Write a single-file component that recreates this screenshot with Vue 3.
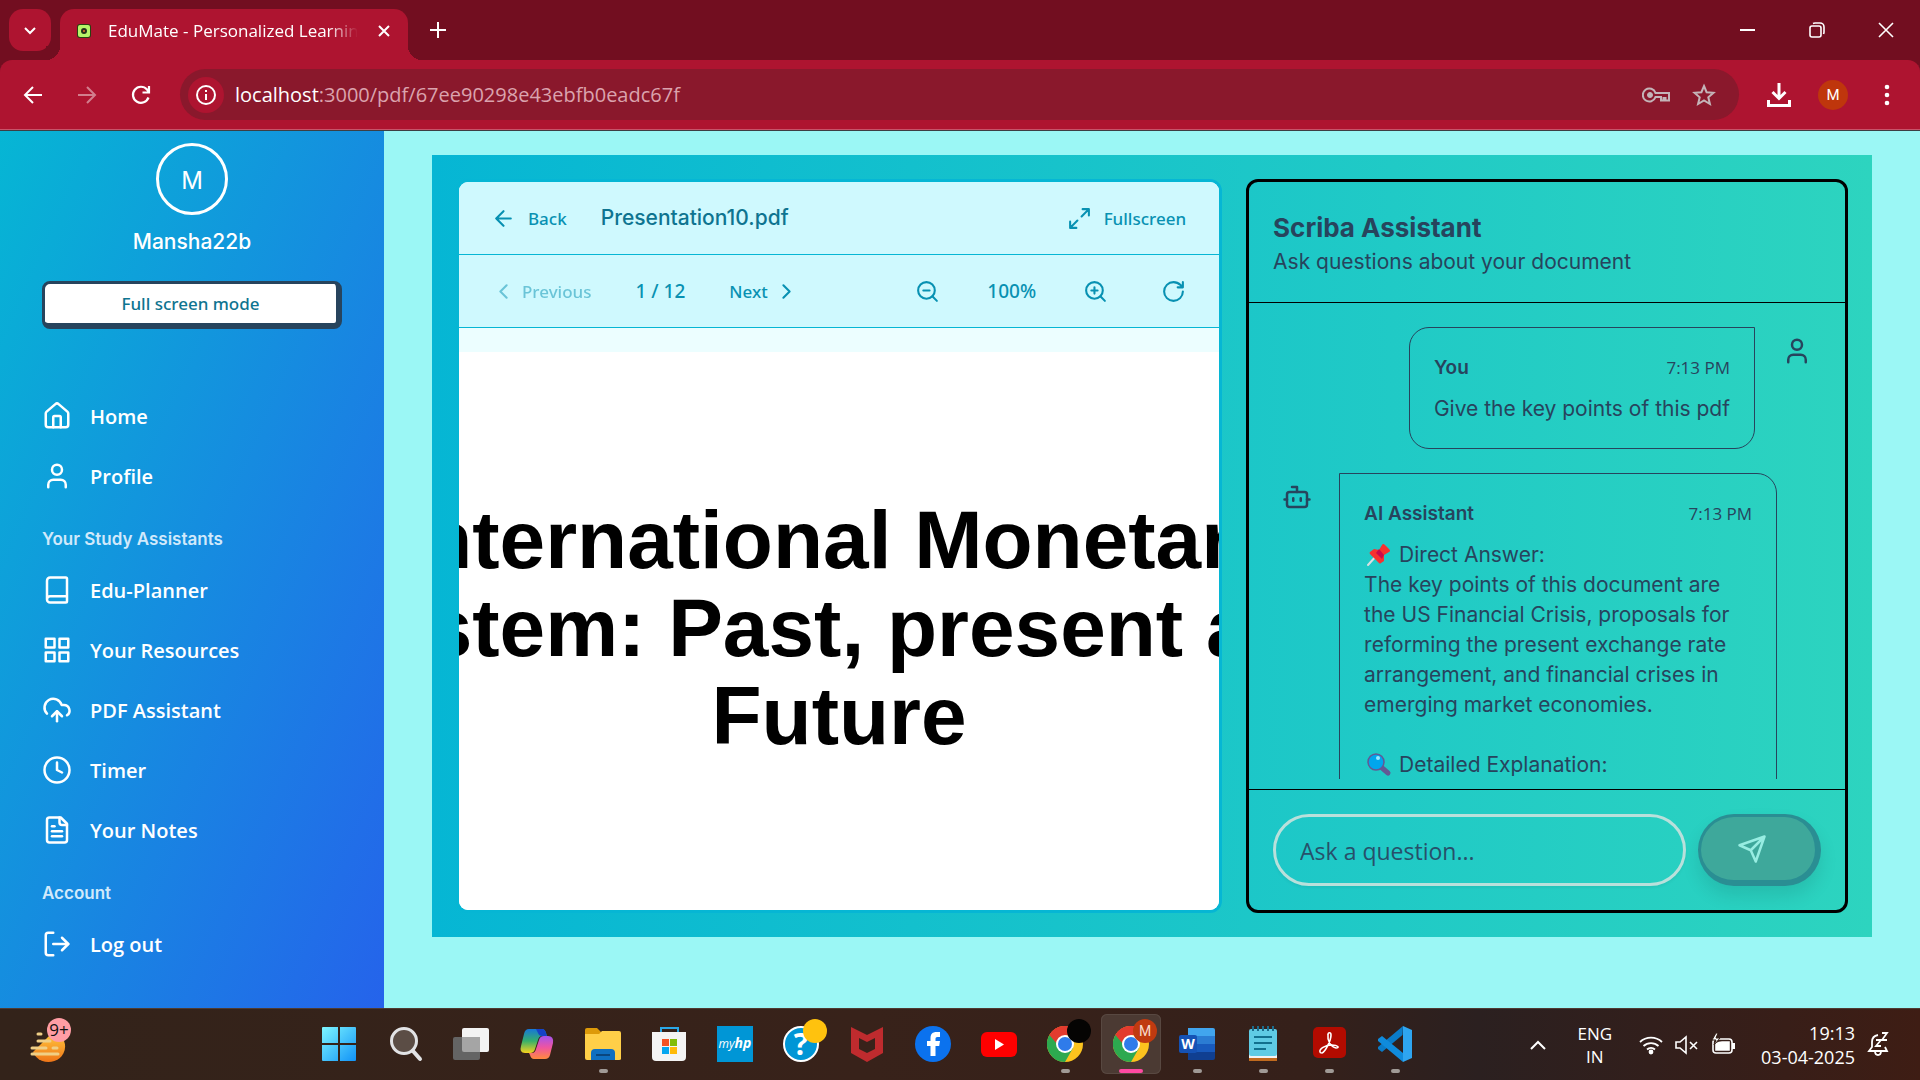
<script setup>
import { ref } from 'vue'

const mainLinks = [
  { label: 'Home', paths: ['M15 21v-8a1 1 0 0 0-1-1h-4a1 1 0 0 0-1 1v8', 'M3 10a2 2 0 0 1 .709-1.528l7-5.999a2 2 0 0 1 2.582 0l7 5.999A2 2 0 0 1 21 10v9a2 2 0 0 1-2 2H5a2 2 0 0 1-2-2z'] },
  { label: 'Profile', paths: ['M19 21v-2a4 4 0 0 0-4-4H9a4 4 0 0 0-4 4v2', 'M8 7a4 4 0 1 0 8 0a4 4 0 1 0-8 0'] }
]

const studyLinks = [
  { label: 'Edu-Planner', paths: ['M4 19.5v-15A2.5 2.5 0 0 1 6.5 2H19a1 1 0 0 1 1 1v18a1 1 0 0 1-1 1H6.5a1 1 0 0 1 0-5H20'] },
  { label: 'Your Resources', paths: ['M3 3h7v7H3z', 'M14 3h7v7h-7z', 'M14 14h7v7h-7z', 'M3 14h7v7H3z'] },
  { label: 'PDF Assistant', paths: ['M12 13v8', 'm8 17 4-4 4 4', 'M4 14.899A7 7 0 1 1 15.71 8h1.79a4.5 4.5 0 0 1 2.5 8.242'] },
  { label: 'Timer', paths: ['M2 12a10 10 0 1 0 20 0a10 10 0 1 0-20 0', 'M12 6v6l4 2'] },
  { label: 'Your Notes', paths: ['M15 2H6a2 2 0 0 0-2 2v16a2 2 0 0 0 2 2h12a2 2 0 0 0 2-2V7Z', 'M14 2v4a2 2 0 0 0 2 2h4', 'M10 9H8', 'M16 13H8', 'M16 17H8'] }
]

const accountLinks = [
  { label: 'Log out', paths: ['M9 21H5a2 2 0 0 1-2-2V5a2 2 0 0 1 2-2h4', 'm16 17 5-5-5-5', 'M21 12H9'] }
]

const groups = [
  { title: '', links: mainLinks },
  { title: 'Your Study Assistants', links: studyLinks },
  { title: 'Account', links: accountLinks }
]

const question = ref('')
</script>

<template>
  <div class="desktop">
    <header class="tabstrip">
      <button class="tab-search" aria-label="Search tabs">
        <svg width="18" height="18" viewBox="0 0 18 18" fill="none" stroke="currentColor" stroke-width="2"><path d="m4 7 5 5 5-5" /></svg>
      </button>
      <div class="tab">
        <svg class="favicon" width="14" height="14" viewBox="0 0 14 14">
          <rect width="14" height="14" rx="3" fill="#27420f" />
          <rect x="1" y="1" width="12" height="12" rx="2" fill="#b6f569" />
          <circle cx="7" cy="7" r="3" fill="#26331b" /><circle cx="7" cy="7" r="1" fill="#e8752c" />
        </svg>
        <span class="tab-title">EduMate - Personalized Learning</span>
        <button class="tab-close" aria-label="Close tab">
          <svg width="14" height="14" viewBox="0 0 14 14" fill="none" stroke="currentColor" stroke-width="2"><path d="m2 2 10 10M12 2 2 12" /></svg>
        </button>
      </div>
      <button class="new-tab" aria-label="New tab">
        <svg width="18" height="18" viewBox="0 0 18 18" fill="none" stroke="currentColor" stroke-width="2"><path d="M9 1v16M1 9h16" /></svg>
      </button>
      <div class="window-buttons">
        <button aria-label="Minimize"><svg width="16" height="16" viewBox="0 0 16 16" fill="none" stroke="currentColor" stroke-width="2"><path d="M0 8h15" /></svg></button>
        <button aria-label="Restore"><svg width="16" height="16" viewBox="0 0 16 16" fill="none" stroke="currentColor" stroke-width="1.6"><rect x="1" y="4" width="11" height="11" rx="2" /><path d="M4 1.500Q5 1 6 1h5a4 4 0 0 1 4 4v5q0 1-.5 2" /></svg></button>
        <button aria-label="Close"><svg width="16" height="16" viewBox="0 0 16 16" fill="none" stroke="currentColor" stroke-width="1.600"><path d="m1 1 14 14M15 1 1 15" /></svg></button>
      </div>
    </header>

    <div class="toolbar-wrap">
      <div class="toolbar">
        <button aria-label="Back"><svg width="20" height="20" viewBox="0 0 20 20" fill="none" stroke="currentColor" stroke-width="2"><path d="M19 10H2M10 2l-8 8 8 8" /></svg></button>
        <button class="dim" aria-label="Forward"><svg width="20" height="20" viewBox="0 0 20 20" fill="none" stroke="currentColor" stroke-width="2"><path d="M1 10h17M10 2l8 8-8 8" /></svg></button>
        <button aria-label="Reload"><svg width="20" height="20" viewBox="0 0 20 20" fill="none" stroke="currentColor" stroke-width="2.200"><path d="M17.500 12.500A8 8 0 1 1 16 4.500L18 7M18 1v6.500h-6.500" /></svg></button>
        <div class="address">
          <span class="site-info">
            <svg width="20" height="20" viewBox="0 0 20 20" fill="none" stroke="currentColor" stroke-width="2"><circle cx="10" cy="10" r="9" /><path d="M10 9v6M10 5v2" /></svg>
          </span>
          <span class="url"><b>localhost</b>:3000/pdf/67ee90298e43ebfb0eadc67f</span>
          <button class="addr-icon" aria-label="Passwords">
            <svg width="28" height="18" viewBox="0 0 28 18" fill="none" stroke="currentColor" stroke-width="2"><path d="M13.500 7A6.500 6.500 0 1 0 13.500 11H19v3.500h2.500V12h2v2.500H27V7Z" /><circle cx="8" cy="9" r="2.500" fill="currentColor" stroke-width="1" /></svg>
          </button>
          <button class="addr-icon" aria-label="Bookmark">
            <svg width="24" height="24" viewBox="0 0 24 24" fill="none" stroke="currentColor" stroke-width="2"><path d="m12 3 2.600 6.200 6.900.6-5.200 4.500 1.600 6.700-5.900-3.600-5.900 3.600 1.600-6.700-5.200-4.500 6.900-.6z" /></svg>
          </button>
        </div>
        <button class="downloads" aria-label="Downloads"><svg width="26" height="26" viewBox="0 0 26 26" fill="none" stroke="currentColor" stroke-width="3"><path d="M13 1v15M6.500 10l6.500 6.500 6.500-6.500M2.500 18v5.500h21V18" /></svg></button>
        <button class="account" aria-label="Account">M</button>
        <button aria-label="Menu"><svg width="6" height="24" viewBox="0 0 6 24" fill="currentColor"><circle cx="3" cy="4" r="2.300" /><circle cx="3" cy="12" r="2.300" /><circle cx="3" cy="20" r="2.300" /></svg></button>
      </div>
    </div>

    <div class="page">
      <aside class="sidebar">
        <div class="avatar">M</div>
        <p class="username">Mansha22b</p>
        <button class="fullscreen-mode">Full screen mode</button>
        <nav>
          <template v-for="group in groups" :key="group.title">
            <h4 v-if="group.title">{{ group.title }}</h4>
            <a v-for="link in group.links" :key="link.label" href="#">
              <svg class="line-icon" width="30" height="30" viewBox="0 0 24 24"><path v-for="d in link.paths" :key="d" :d="d" /></svg>
              <span>{{ link.label }}</span>
            </a>
          </template>
        </nav>
      </aside>

      <main>
        <div class="workspace">
          <section class="viewer">
            <div class="viewer-row">
              <div class="group title-group">
                <button><svg class="line-icon" width="25" height="25" viewBox="0 0 24 24"><path d="m12 19-7-7 7-7M19 12H5" /></svg>Back</button>
                <h2>Presentation10.pdf</h2>
              </div>
              <button><svg class="line-icon" width="25" height="25" viewBox="0 0 24 24"><path d="M15 3h6v6M9 21H3v-6M21 3l-7 7M3 21l7-7" /></svg>Fullscreen</button>
            </div>
            <div class="viewer-row">
              <div class="group pager">
                <button disabled><svg class="line-icon" width="25" height="25" viewBox="0 0 24 24"><path d="m15 18-6-6 6-6" /></svg>Previous</button>
                <span class="count">1 / 12</span>
                <button>Next<svg class="line-icon" width="25" height="25" viewBox="0 0 24 24"><path d="m9 18 6-6-6-6" /></svg></button>
              </div>
              <div class="group zoomer">
                <button aria-label="Zoom out"><svg class="line-icon" width="25" height="25" viewBox="0 0 24 24"><circle cx="11" cy="11" r="8" /><path d="m21 21-4.350-4.350M8 11h6" /></svg></button>
                <span class="count">100%</span>
                <button aria-label="Zoom in"><svg class="line-icon" width="25" height="25" viewBox="0 0 24 24"><circle cx="11" cy="11" r="8" /><path d="m21 21-4.350-4.350M8 11h6M11 8v6" /></svg></button>
                <button class="rotate" aria-label="Rotate"><svg class="line-icon" width="25" height="25" viewBox="0 0 24 24"><path d="M21 12a9 9 0 1 1-9-9c2.520 0 4.930 1 6.740 2.740L21 8M21 3v5h-5" /></svg></button>
              </div>
            </div>
            <div class="pdf-scroll">
              <div class="slide">
                <h1>International Monetary<br />System: Past, present and<br />Future</h1>
              </div>
            </div>
          </section>

          <section class="chat">
            <header class="chat-head">
              <h3>Scriba Assistant</h3>
              <p>Ask questions about your document</p>
            </header>
            <div class="messages">
              <div class="message mine">
                <div class="bubble">
                  <div class="meta"><strong>You</strong><time>7:13 PM</time></div>
                  <p>Give the key points of this pdf</p>
                </div>
                <svg class="line-icon who" width="30" height="30" viewBox="0 0 24 24"><path d="M19 21v-2a4 4 0 0 0-4-4H9a4 4 0 0 0-4 4v2" /><circle cx="12" cy="7" r="4" /></svg>
              </div>
              <div class="message">
                <svg class="line-icon who" width="30" height="30" viewBox="0 0 24 24"><path d="M12 8V4H8M2 14h2M20 14h2M15 13v2M9 13v2" /><rect x="4" y="8" width="16" height="12" rx="2" /></svg>
                <div class="bubble">
                  <div class="meta"><strong>AI Assistant</strong><time>7:13 PM</time></div>
                  <p class="with-emoji">
                    <svg width="28" height="24" viewBox="0 0 28 24">
                      <path d="m4 22 9-10" stroke="#d9dfe2" stroke-width="2" stroke-linecap="round" />
                      <path d="m6 9 4-3 5 1 3-5q1-2 3 0l4 4q2 2 0 3l-5 3v6l-3 2q-1 1-2 0L6 11q-1-1 0-2z" fill="#f8312f" />
                      <path d="m15 6 5 6-2 4-6-6z" fill="#ca0b4a" />
                    </svg>Direct Answer:
                  </p>
                  <p>The key points of this document are the US Financial Crisis, proposals for reforming the present exchange rate arrangement, and financial crises in emerging market economies.</p>
                  <p class="with-emoji later">
                    <svg width="28" height="24" viewBox="0 0 28 24">
                      <path d="m17 14 7 6" stroke="#635994" stroke-width="5" stroke-linecap="round" />
                      <circle cx="12" cy="9" r="8" fill="#00a6ed" stroke="#635994" stroke-width="1.500" />
                      <circle cx="14" cy="5" r="2" fill="#9be9ff" />
                    </svg>Detailed Explanation:
                  </p>
                </div>
              </div>
            </div>
            <form class="composer" @submit.prevent>
              <input v-model="question" type="text" placeholder="Ask a question..." aria-label="Ask a question" />
              <button type="submit" aria-label="Send">
                <svg class="line-icon" width="30" height="30" viewBox="0 0 24 24"><path d="m22 2-7 20-4-9-9-4ZM22 2 11 13" /></svg>
              </button>
            </form>
          </section>
        </div>
      </main>
    </div>

    <footer class="taskbar">
      <button class="weather" aria-label="Weather">
        <svg width="36" height="32" viewBox="2 14 36 32">
          <defs><linearGradient id="sun" x2="0" y2="1"><stop offset="0" stop-color="#ffc33b" /><stop offset="1" stop-color="#ef7518" /></linearGradient></defs>
          <path d="M36 24a16 15 0 0 1-31 11l17-17z" fill="url(#sun)" />
          <path d="M10 17h3M10 24h12M4 31h14M25 31h4M4 37h26" stroke="#f0cf86" stroke-width="3" stroke-linecap="round" />
        </svg>
        <span class="badge">9+</span>
      </button>

      <div class="apps">
        <button aria-label="Start"><svg width="36" height="36" viewBox="0 0 36 36"><defs><linearGradient id="win" x2="1" y2="1"><stop offset="0" stop-color="#7ef6ff" /><stop offset="1" stop-color="#1193f7" /></linearGradient></defs><path d="M2 1h15v16H1V2q0-1 1-1zM19 1h15q1 0 1 1v15H19zM1 19h16v16H2q-1 0-1-1zM19 19h16v15q0 1-1 1H19z" fill="url(#win)" /></svg></button>
        <button aria-label="Search"><svg width="36" height="36" viewBox="0 0 36 36" fill="none" stroke="#e2e3e5"><circle cx="17" cy="15" r="12.500" fill="#5b4d45" stroke-width="3" /><path d="m26 25 7 8" stroke-width="4" stroke-linecap="round" /></svg></button>
        <button aria-label="Task view"><svg width="38" height="36" viewBox="0 0 38 36"><rect x="10" y="2" width="27" height="24" rx="2" fill="#f3f3f3" /><rect x="1" y="11" width="27" height="23" rx="2" fill="#646464" /><path d="M10 11h18v15H12q-2 0-2-2z" fill="#a5a5a5" /></svg></button>
        <button aria-label="Copilot"><svg width="36" height="36" viewBox="0 0 36 36"><defs><linearGradient id="cpa" x2="0" y2="1"><stop offset="0" stop-color="#1677d8" /><stop offset=".5" stop-color="#35b06b" /><stop offset="1" stop-color="#f7d21c" /></linearGradient><linearGradient id="cpb" x2="0" y2="1"><stop offset="0" stop-color="#a453ef" /><stop offset=".5" stop-color="#ef55a0" /><stop offset="1" stop-color="#ff8a3d" /></linearGradient></defs><path d="M10 3h13q3 0 4 4l1 3h-5q-3 0-4 4l-3 9q-1 4-5 4H6q-6 0-4-7l3-12q1-5 5-5z" fill="url(#cpa)" /><path d="M17 3h6q3 0 4 4l1 3h-5q-3 0-4-3z" fill="#1642c7" /><path d="M26 33H15q-3 0-4-4l-1-2h3q3 0 4-4l3-9q1-4 5-4h4q6 0 5 7l-3 12q-1 4-5 4z" fill="url(#cpb)" /></svg></button>
        <button aria-label="File Explorer" class="open"><svg width="38" height="36" viewBox="0 0 38 36"><path d="M1 4q0-2 2-2h10l4 4v4H1z" fill="#dd9a09" /><path d="M1 8h14l3-3h17q2 0 2 2v26q0 1-2 1H3q-2 0-2-2z" fill="#ffcf48" /><path d="M7 34V27q0-4 4-4h16q4 0 4 4v7z" fill="#0f6fc0" /><path d="M12 29h14" stroke="#0a467e" stroke-width="2" /></svg></button>
        <button aria-label="Microsoft Store"><svg width="36" height="36" viewBox="0 0 36 36"><path d="M10 6V2h17v5" fill="none" stroke="#2aa8e8" stroke-width="2" /><path d="M1 6h34v25q0 4-4 4H5q-4 0-4-4z" fill="#f4f4f4" /><path fill="#f35325" d="M11 13h7v7h-7z" /><path fill="#81bc06" d="M19 13h7v7h-7z" /><path fill="#05a6f0" d="M11 21h7v7h-7z" /><path fill="#ffba08" d="M19 21h7v7h-7z" /></svg></button>
        <button aria-label="myHP"><span class="myhp">my<b>hp</b></span></button>
        <button aria-label="HP Support" class="support"><span class="help">?</span><i /></button>
        <button aria-label="McAfee"><svg width="36" height="36" viewBox="0 0 36 36"><path d="m2 1 16 8 16-8v26l-16 9-16-9zM10 12v11l8 4 8-4V12l-8 4z" fill="#bf2b2e" fill-rule="evenodd" /></svg></button>
        <button aria-label="Facebook"><svg width="36" height="36" viewBox="0 0 36 36"><circle cx="18" cy="18" r="18" fill="#0b72ee" /><path d="M15.500 30V20H12v-5h3.500v-3c0-4 2-6 6-6H25v5h-2.500c-1.500 0-2 .7-2 2v2H25l-.8 5h-3.700v10z" fill="#fff" /></svg></button>
        <button aria-label="YouTube"><svg width="36" height="36" viewBox="0 0 36 36"><rect y="6" width="36" height="25" rx="6" fill="#f00" /><path d="m14 13 9 5.500-9 5.500z" fill="#fff" /></svg></button>
        <button v-for="kind in ['dark', 'm']" :key="kind" aria-label="Chrome" :class="['open', 'chrome', { active: kind === 'm' }]">
          <svg width="36" height="36" viewBox="0 0 36 36"><circle cx="18" cy="18" r="18" fill="#fcc31e" /><path d="M18 18 2.400 9A18 18 0 0 1 33.600 9z" fill="#e33b2e" /><path d="M18 18 2.400 9A18 18 0 0 0 18 36l8-14z" fill="#2da94f" /><path d="M18 9h15.600L26 20z" fill="#fcc31e" /><path d="M2.400 9A18 18 0 0 1 33.600 9H18l-8 9z" fill="#e33b2e" /><circle cx="18" cy="18" r="9" fill="#fff" /><circle cx="18" cy="18" r="7" fill="#2f7bea" /></svg>
          <span class="profile">{{ kind === 'm' ? 'M' : '' }}</span>
        </button>
        <button aria-label="Word" class="open"><svg width="36" height="36" viewBox="0 0 36 36"><path d="M9 2h25q2 0 2 2v7H9z" fill="#41a5ee" /><path d="M9 10h27v8H9z" fill="#2b7cd3" /><path d="M9 18h27v8H9z" fill="#185abd" /><path d="M9 26h27v6q0 2-2 2H9z" fill="#103f91" /><rect y="9" width="18" height="18" rx="2" fill="#1552b5" /><text x="9" y="23" text-anchor="middle" font-family="Open Sans, sans-serif" font-weight="700" font-size="14" fill="#fff">W</text></svg></button>
        <button aria-label="Notepad" class="open"><svg width="36" height="36" viewBox="0 0 36 36"><path d="M4 31h28v4H4z" fill="#c06a1e" /><path d="M4 27h28v5H4z" fill="#f2f2f2" /><rect x="4" y="3" width="28" height="27" rx="2" fill="#5fcbe4" /><path d="M8 0v5M13 0v5M18 0v5M23 0v5M28 0v5" stroke="#1c6c8c" stroke-width="2" /><path d="M9 11h18M9 17h18M9 23h12" stroke="#12708e" stroke-width="2" /></svg></button>
        <button aria-label="Acrobat" class="open"><svg width="36" height="36" viewBox="0 0 36 36"><rect x="2" y="1" width="33" height="31" rx="5" fill="#b30b00" /><path d="M9 26c-1-3 5-7 12-7 6 0 8 3 4 3-5-1-9-7-8-13 0-3 3-3 3 0 0 6-6 17-9 18q-2 0-2-1z" fill="none" stroke="#fff" stroke-width="1.600" /></svg></button>
        <button aria-label="Visual Studio Code" class="open"><svg width="36" height="36" viewBox="0 0 36 36"><path d="m26 0 9 4v28l-9 4z" fill="#2ea5f0" /><path d="m26 0-.5 9L5 26l-4-3v-2z" fill="#0a7bc8" /><path d="M26 36v-9L5 10l-4 3v2z" fill="#0f8bdc" /></svg></button>
      </div>

      <div class="tray">
        <button aria-label="Hidden icons"><svg width="18" height="18" viewBox="0 0 18 18" fill="none" stroke="currentColor" stroke-width="2"><path d="m2 13 7-7 7 7" /></svg></button>
        <span class="lang">ENG<br />IN</span>
        <div class="status">
          <svg width="26" height="24" viewBox="0 0 26 24" fill="none" stroke="currentColor" stroke-width="1.800"><path d="M2 9a16 16 0 0 1 22 0M5.500 13a11 11 0 0 1 15 0M9 16.500a6 6 0 0 1 8 0" /><circle cx="13" cy="19" r="1.500" fill="currentColor" /></svg>
          <svg width="26" height="24" viewBox="0 0 26 24" fill="none" stroke="currentColor" stroke-width="1.600"><path d="M2 9h4l6-5v16l-6-5H2zM16 9l7 7M23 9l-7 7" /></svg>
          <svg width="26" height="24" viewBox="0 0 26 24" fill="none" stroke="currentColor" stroke-width="1.600"><rect x="3" y="6" width="19" height="14" rx="3" /><path d="M6 11q3-2 6-2h7v8H6z" fill="currentColor" /><path d="M23.500 10v6" stroke-width="3" /><path d="M6 0 2 7h4l-2 5 6-7H6l2-5z" fill="currentColor" stroke="#352017" stroke-width="1" /></svg>
        </div>
        <time class="clock">19:13<br />03-04-2025</time>
        <svg class="bell" width="24" height="28" viewBox="0 0 24 28" fill="none" stroke="currentColor" stroke-width="1.800"><path d="M11 4q-6 1-6 7v5l-3 4h18l-2-4M8 20q0 4 3 4t3-4M9 9h5l-5 6h5M15 2h5l-5 7h5" /></svg>
      </div>
    </footer>
  </div>
</template>

<style>
body { margin: 0; background: #9bf7f5; }
</style>

<style scoped>
* { box-sizing: border-box; }
h1, h2, h3, h4, p { margin: 0; }
button { border: 0; padding: 0; background: none; color: inherit; font: inherit; display: flex; align-items: center; justify-content: center; }
svg { flex: none; }
.desktop { height: 100vh; display: flex; flex-direction: column; overflow: hidden; font-family: "Open Sans", "Noto Sans", sans-serif; }
.line-icon { fill: none; stroke: currentColor; stroke-width: 2; stroke-linecap: round; stroke-linejoin: round; }

.tabstrip { flex: none; height: 60px; background: #720e20; color: #fff; display: flex; align-items: flex-end; padding-left: 9px; }
.tab-search { width: 42px; height: 42px; margin-bottom: 9px; border-radius: 14px; background: #ae1430; }
.tab { position: relative; width: 348px; height: 51px; margin-left: 9px; padding: 0 17px 8px 17px; background: #ae1430; border-radius: 14px 14px 0 0; display: flex; align-items: center; }
.tab::before, .tab::after { content: ""; position: absolute; bottom: 0; width: 14px; height: 14px; }
.tab::before { right: 100%; background: radial-gradient(circle at 0 0, #720e20 14px, #ae1430 14px); }
.tab::after { left: 100%; background: radial-gradient(circle at 100% 0, #720e20 14px, #ae1430 14px); }
.tab-title { flex: 1; margin: 0 19px 0 17px; font-size: 17px; line-height: 24px; white-space: nowrap; overflow: hidden; mask-image: linear-gradient(to right, #000 88%, transparent); }
.new-tab { width: 40px; height: 40px; margin: 0 0 10px 10px; }
.window-buttons { margin-left: auto; align-self: stretch; display: flex; }
.window-buttons button { width: 69px; }

.toolbar-wrap { flex: none; background: #720e20; }
.toolbar { height: 71px; padding: 0 30px 1px 23px; background: #ae1430; border-radius: 12px 12px 0 0; border-bottom: 1px solid #3c3f44; box-shadow: inset 0 -1px #c8546a; color: #fff; display: flex; align-items: center; }
.toolbar > button { margin-right: 34px; }
.toolbar > button:last-child { margin-right: 0; }
.toolbar > .downloads { margin-right: 26px; }
.toolbar .dim { opacity: .45; }
.address { flex: 1; height: 51px; margin: 0 27px 0 -5px; padding: 0 23px 0 8px; border-radius: 26px; background: #8a182c; display: flex; align-items: center; }
.site-info { width: 36px; height: 36px; border-radius: 50%; background: #ae1430; display: flex; align-items: center; justify-content: center; }
.url { margin-left: 11px; flex: 1; font-size: 20px; color: #dba3ae; }
.url b { font-weight: 400; color: #fff; }
.addr-icon { margin-left: 22px; color: #c4b4b8; }
.toolbar > .account { width: 30px; height: 30px; margin-right: 36px; border-radius: 50%; background: #bf360c; font-size: 15px; font-family: Roboto, sans-serif; }

.page { flex: 1; min-height: 0; display: flex; background: #9bf7f5; }
.sidebar { width: 384px; padding: 12px 42px 0; background: linear-gradient(to bottom right, #06b6d4, #2563eb); color: #fff; display: flex; flex-direction: column; overflow: hidden; }
.avatar { flex: none; width: 72px; height: 72px; padding-top: 4px; align-self: center; border: 3px solid #fff; border-radius: 50%; display: flex; align-items: center; justify-content: center; font: 24px/24px Inter, sans-serif; }
.username { margin-top: 13px; text-align: center; font: 500 21px/28px Inter, sans-serif; }
.fullscreen-mode { flex: none; height: 48px; margin-top: 25px; margin-bottom: 57px; border: 3px solid #27445d; border-right-width: 6px; border-bottom-width: 6px; border-radius: 8px; background: #fff; color: #0e7490; font-size: 17px; font-weight: 500; }
.fullscreen-mode, .viewer-row button, .count { font-family: "Noto Sans", "Open Sans", sans-serif; }
nav { display: flex; flex-direction: column; }
nav a { height: 60px; display: flex; align-items: center; gap: 18px; color: #fff; text-decoration: none; font-size: 20px; font-weight: 600; }
nav h4 { height: 24px; margin: 20px 0 10px; font: 600 17px/26px Inter, sans-serif; color: #d1e9fb; }

main { flex: 1; min-width: 0; padding: 24px 48px 71px; display: flex; }
.workspace { flex: 1; min-width: 0; padding: 24px; display: grid; grid-template-columns: minmax(0, 56fr) minmax(0, 44fr); grid-template-rows: minmax(0, 1fr); gap: 24px; background: linear-gradient(to right, #06b6d4, #2dd4bf); }
.viewer { border: 3px solid #06b6d4; border-radius: 12px; overflow: hidden; display: flex; flex-direction: column; background: #ecfeff; }
.viewer-row { flex: none; height: 73px; padding: 0 33px 0 32px; background: #cff9fe; border-bottom: 1px solid #06b6d4; display: flex; align-items: center; justify-content: space-between; color: #0891b2; font-size: 17px; font-weight: 500; }
.viewer-row button { gap: 12px; }
.viewer-row button:disabled { opacity: .5; }
.viewer-row h2 { font: 500 21px/28px Inter, sans-serif; color: #0e7490; }
.group { display: flex; align-items: center; }
.title-group { gap: 34px; }
.pager { gap: 44px; }
.pager button { gap: 6px; }
.zoomer { gap: 47px; }
.rotate { margin-left: 6px; }
.count { font-size: 19px; }
.pdf-scroll { flex: 1; min-height: 0; padding-top: 24px; }
.slide { height: 100%; background: #fff; display: flex; justify-content: center; overflow: hidden; }
.slide h1 { flex: none; margin-top: 144px; font: 700 82px/88px "Liberation Sans", Arial, sans-serif; text-align: center; white-space: nowrap; color: #000; }

.chat { border: 3px solid #000; border-radius: 12px; display: flex; flex-direction: column; color: #27445d; font: 21px/30px Inter, sans-serif; overflow: hidden; }
.chat-head { flex: none; height: 121px; padding: 30px 24px 0; border-bottom: 1px solid #000; }
.chat-head h3 { font-size: 26px; line-height: 32px; font-weight: 700; }
.chat-head p { line-height: 36px; }
.messages { flex: 1; min-height: 0; margin: 24px 24px 10px; overflow: hidden; }
.message { display: flex; gap: 27px; padding-left: 9px; margin-bottom: 24px; }
.mine { justify-content: flex-end; padding: 0 9px 0 0; }
.who { margin-top: 9px; }
.bubble { width: 438px; padding: 24px; border: 1px solid #27445d; border-radius: 0 20px 20px 20px; }
.mine .bubble { width: auto; border-radius: 20px 0 20px 20px; }
.meta { height: 32px; margin-bottom: 10px; display: flex; justify-content: space-between; align-items: center; }
.meta strong { font-size: 19px; font-weight: 600; }
.meta time { font: 17px/24px "Open Sans", sans-serif; }
.with-emoji { display: flex; align-items: center; gap: 7px; }
.later { margin-top: 30px; }
.composer { flex: none; padding: 24px; border-top: 1px solid #000; display: flex; gap: 12px; }
.composer input { flex: 1; min-width: 0; height: 72px; padding: 2px 24px 0; border: 3px solid #b9e0db; border-radius: 36px; background: transparent; outline: 0; color: #27445d; font: 23px/30px "Open Sans", sans-serif; box-shadow: 0 2px 3px rgb(0 0 0 / 5%); }
.composer input::placeholder { color: #27506a; opacity: 1; }
.composer button { width: 123px; height: 72px; padding-right: 12px; border: 3px solid #2a8e93; border-right-width: 6px; border-bottom-width: 6px; border-radius: 36px; background: #3ea89b; color: #97ede2; box-shadow: 0 10px 18px rgb(0 0 0 / 10%); }

.taskbar { flex: none; position: relative; height: 72px; padding: 0 29px 0 24px; border-top: 1px solid #4e3b32; background: linear-gradient(to right, #33231a, #38221a 45%, #35201a 68%, #2b2020 77%, #321f1c 86%, #3e1d14); color: #fff; display: flex; align-items: center; justify-content: space-between; }
.weather { position: relative; height: 48px; padding: 4px 0 0 6px; }
.badge { position: absolute; left: 23px; top: -3px; width: 24px; height: 24px; border-radius: 50%; background: #ff9da4; color: #111; font-size: 17px; line-height: 24px; text-align: center; }
.apps { position: absolute; left: 309px; top: 5px; display: flex; gap: 6px; }
.apps button { position: relative; width: 60px; height: 60px; border-radius: 6px; }
.apps .open::after { content: ""; position: absolute; left: 26px; bottom: 1px; width: 9px; height: 4px; border-radius: 2px; background: #a09a96; }
.apps .active { background: #4b3a33; box-shadow: inset 0 0 0 1px #584841; }
.apps .active::after { left: 18px; width: 24px; background: #ff4aa2; }
.profile { position: absolute; right: 4px; top: 5px; width: 24px; height: 24px; border-radius: 50%; background: #050403; font: 14px/24px Roboto, sans-serif; color: #f8dccd; }
.active .profile { background: #c03a10; }
.myhp { width: 36px; height: 36px; background: #0096d6; font: italic 12px/34px "Open Sans", sans-serif; }
.myhp b { font-size: 14px; }
.help { width: 36px; height: 36px; border: 2px solid #fff; border-radius: 50%; background: #0096d6; font: 700 30px/32px "Open Sans", sans-serif; }
.support i { position: absolute; right: 4px; top: 5px; width: 24px; height: 24px; border-radius: 50%; background: #ffc20e; }
.tray { display: flex; align-items: center; margin-left: auto; }
.lang { margin: 0 26px 0 30px; font-size: 17px; line-height: 23px; text-align: center; }
.status { display: flex; gap: 10px; }
.clock { margin: 0 12px 0 25px; font-size: 18px; line-height: 24px; text-align: right; }
</style>
